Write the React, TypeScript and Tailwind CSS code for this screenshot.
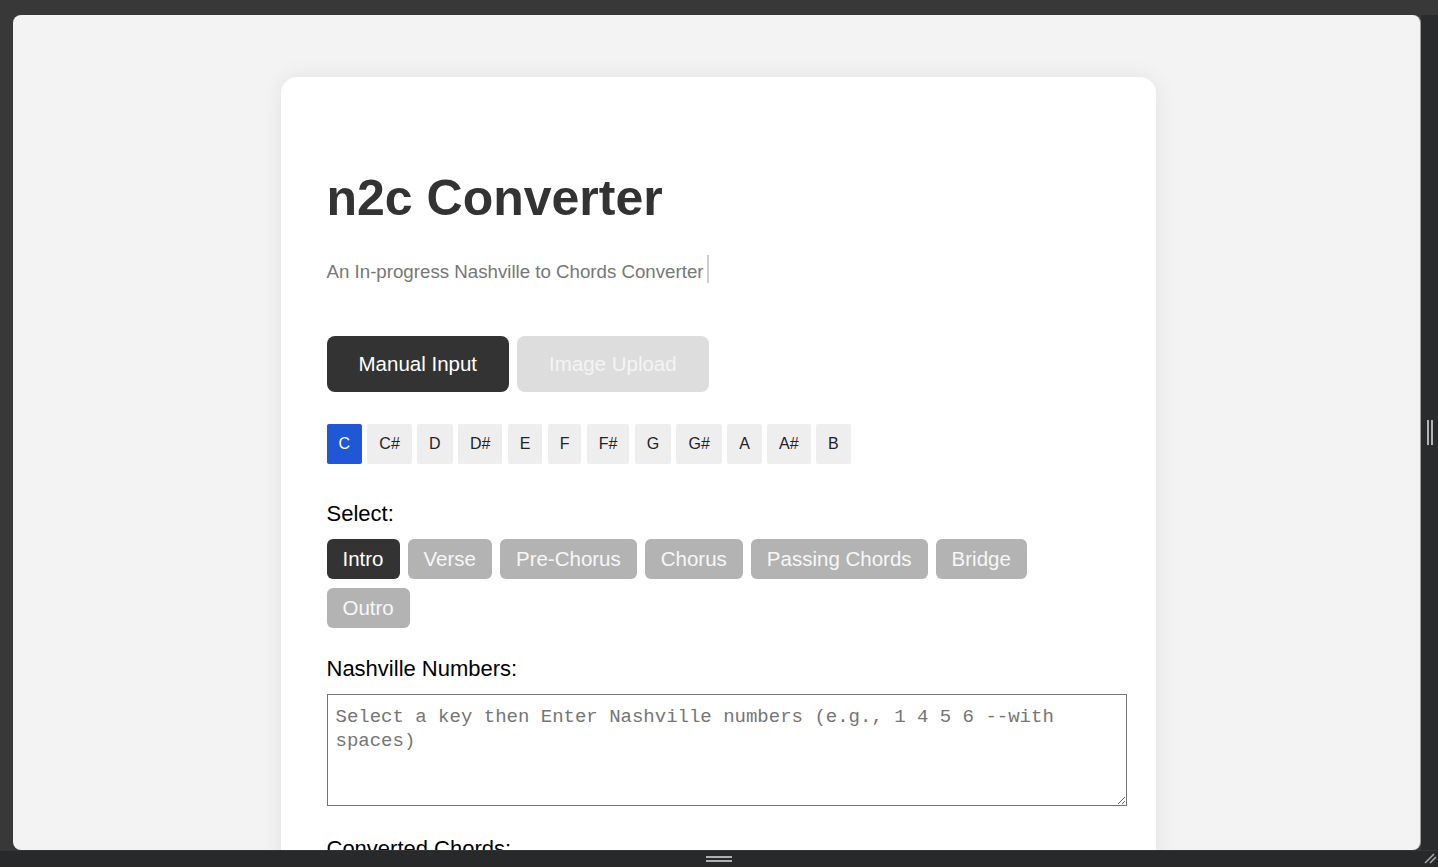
/** n2c Converter — single screen, framed as it sits in the preview window. */
import { useState } from 'react';

const KEYS = ['C', 'C#', 'D', 'D#', 'E', 'F', 'F#', 'G', 'G#', 'A', 'A#', 'B'];
const SECTIONS = ['Intro', 'Verse', 'Pre-Chorus', 'Chorus', 'Passing Chords', 'Bridge', 'Outro'];

function Converter() {
  const [mode, setMode] = useState<'manual' | 'image'>('manual');
  const [key, setKey] = useState('C');
  const [section, setSection] = useState('Intro');
  const [numbers, setNumbers] = useState('');

  return (
    <div className="mx-auto w-[875px] rounded-2xl bg-white pb-10 pl-[46px] pr-[29px] pt-[92px] shadow-[0_0_22px_rgba(0,0,0,0.07)]">
      <h1 className="text-[50px] font-bold leading-[58px] text-[#333]">n2c Converter</h1>
      <div className="mt-[28px]">
        <span className="inline-block border-r-2 border-[#cfcfcf] pr-[3px] pt-[6px] text-[18.7px] leading-[22px] text-[#777]">
          An In-progress Nashville to Chords Converter
        </span>
      </div>

      <div className="mt-[51px] flex gap-2">
        <button
          type="button"
          onClick={() => setMode('manual')}
          className={`h-[56px] rounded-lg px-8 text-[20.5px] ${
            mode === 'manual' ? 'bg-[#333] text-white' : 'bg-[#ddd] text-[#f4f4f4]'
          }`}
        >
          Manual Input
        </button>
        <button
          type="button"
          onClick={() => setMode('image')}
          className={`h-[56px] rounded-lg px-8 text-[20.5px] ${
            mode === 'image' ? 'bg-[#333] text-white' : 'bg-[#ddd] text-[#f4f4f4]'
          }`}
        >
          Image Upload
        </button>
      </div>

      <div className="mt-[32px] flex gap-[5.3px]">
        {KEYS.map((k) => (
          <button
            key={k}
            type="button"
            onClick={() => setKey(k)}
            className={`h-[40px] rounded-[2px] px-3 text-base ${
              k === key ? 'bg-[#1f57d6] text-white' : 'bg-[#eee] text-[#222]'
            }`}
          >
            {k}
          </button>
        ))}
      </div>

      <p className="mt-[38px] text-[22px] leading-[24px] text-black">Select:</p>
      <div className="mt-[13px] flex max-w-[760px] flex-wrap gap-x-2 gap-y-[9px]">
        {SECTIONS.map((s) => (
          <button
            key={s}
            type="button"
            onClick={() => setSection(s)}
            className={`h-[40px] rounded-[6px] px-[16px] text-[20.5px] ${
              s === section ? 'bg-[#333] text-white' : 'bg-[#b3b3b3] text-[#f7f7f7]'
            }`}
          >
            {s}
          </button>
        ))}
      </div>

      <p className="mt-[29px] text-[22px] leading-[24px] text-black">Nashville Numbers:</p>
      <textarea
        value={numbers}
        onChange={(e) => setNumbers(e.target.value)}
        placeholder="Select a key then Enter Nashville numbers (e.g., 1 4 5 6 --with spaces)"
        className="mt-[13px] block h-[112px] w-[800px] border border-[#767676] px-2 pt-[10px] font-['Liberation_Mono',monospace] text-[19px] leading-[24px] text-[#222] placeholder:text-[#757575]"
      />

      <p className="mt-[31px] text-[22px] leading-[24px] text-black">Converted Chords:</p>
      <div className="mt-3 h-[120px]" />
    </div>
  );
}

export default function App() {
  return (
    <div className="flex h-[867px] w-[1438px] flex-col overflow-hidden bg-[#383838] font-['Liberation_Sans',Arial,sans-serif]">
      <div className="h-[15px] shrink-0" />
      <div className="flex min-h-0 flex-1">
        <div className="w-[13px] shrink-0" />
        <main className="min-w-0 flex-1 overflow-hidden rounded-[8px] border-r border-[#9c9c9c] bg-[#f3f3f3] pl-[3px] pt-[62px]">
          <Converter />
        </main>
        <div className="flex w-[17px] shrink-0 items-center justify-center gap-[2px] bg-[#2a2b2d]">
          <span className="h-[25px] w-[2px] bg-[#b4b4b4]" />
          <span className="h-[25px] w-[2px] bg-[#b4b4b4]" />
        </div>
      </div>
      <div className="relative flex h-[17px] shrink-0 flex-col items-center justify-center gap-[2px] border-t border-[#343537] bg-[#28292b]">
        <span className="h-[2px] w-[26px] bg-[#b0b0b0]" />
        <span className="h-[2px] w-[26px] bg-[#b0b0b0]" />
        <svg className="absolute bottom-[3px] right-[1px]" width="13" height="11" viewBox="0 0 13 11">
          <path d="M1 10 L10 1 M6 10 L12 4" stroke="#a8a8a8" strokeWidth="1.5" fill="none" />
        </svg>
      </div>
    </div>
  );
}
